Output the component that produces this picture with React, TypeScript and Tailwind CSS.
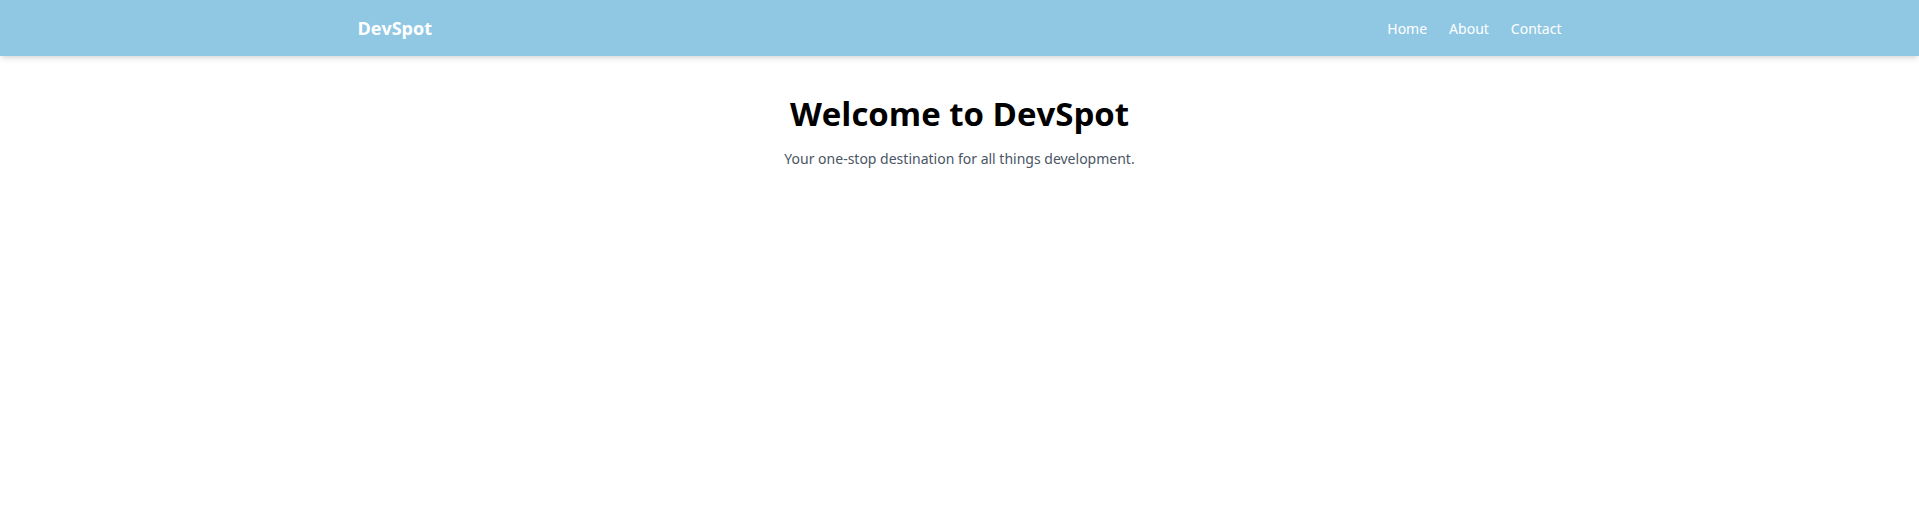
const links = ["Home", "About", "Contact"];

export default function App() {
  return (
    <div className="min-h-screen bg-white font-['Open_Sans','Noto_Sans',sans-serif]">
      <nav className="bg-[#90c8e4] text-white shadow-md">
        <div className="mx-auto flex h-14 max-w-[1204px] items-center justify-between">
          <a href="#" className="text-lg font-bold">DevSpot</a>
          <div className="flex gap-[22px] pt-px font-['Noto_Sans','Open_Sans',sans-serif] text-sm leading-6">
            {links.map((label) => (
              <a key={label} href={`#${label.toLowerCase()}`}>{label}</a>
            ))}
          </div>
        </div>
      </nav>
      <main className="px-4 pt-9 text-center">
        <h1 className="text-[33px] leading-11 font-bold text-black">Welcome to DevSpot</h1>
        <p className="mt-3 font-['Noto_Sans','Open_Sans',sans-serif] text-sm leading-[22px] text-gray-600">Your one-stop destination for all things development.</p>
      </main>
    </div>
  );
}
